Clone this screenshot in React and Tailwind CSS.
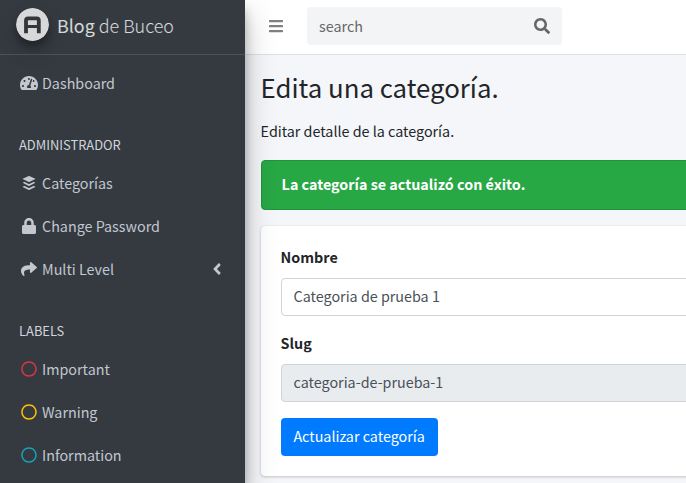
import { FaTachometerAlt, FaBuffer, FaLock, FaShare, FaAngleLeft, FaRegCircle, FaBars, FaSearch } from "react-icons/fa";

function NavItem({ icon: Icon, label, color = "text-[#c2c7d0]", iconSize = "h-[16px] w-[16px]", expandable = false }) {
  return (
    <a className="flex h-[43px] items-center pl-[16px] pr-[19px]">
      <span className={`flex w-[26px] justify-center ${color}`}>
        <Icon className={`shrink-0 ${iconSize}`} />
      </span>
      <span className="leading-6">{label}</span>
      {expandable && <FaAngleLeft size={18} className="ml-auto" />}
    </a>
  );
}

function NavHeader({ children }) {
  return (
    <div className="flex h-[57px] items-end pb-[6px] pl-[19px] text-[12.9px] leading-5 text-[#d0d4db]">
      {children}
    </div>
  );
}

function Brand() {
  return (
    <div className="flex h-[55px] items-start border-b border-[#4b545c] pl-[16px] pt-[8px]">
      <svg viewBox="0 0 33 33" className="size-[33px] rounded-full shadow-[0_10px_20px_rgba(0,0,0,0.19),0_6px_6px_rgba(0,0,0,0.23)]">
        <circle cx="16.5" cy="16.5" r="16.5" fill="#d7d8d9" />
        <path d="M10 25.2V12.6Q10 10.4 12.2 10.4H20.6Q22.8 10.4 22.8 12.6V25.2" fill="none" stroke="#343638" strokeWidth="3.8" />
        <path d="M10 18.6H23" fill="none" stroke="#343638" strokeWidth="3" />
      </svg>
      <span className="ml-[8px] mt-[2px] whitespace-nowrap text-[17.9px] font-light leading-[30px] text-white/80">
        <span className="font-normal">Blog</span> de Buceo
      </span>
    </div>
  );
}

function Sidebar() {
  return (
    <aside className="relative z-10 h-full w-[245px] shrink-0 bg-[#343a40] text-[#c2c7d0] shadow-[0_14px_28px_rgba(0,0,0,0.25),0_10px_10px_rgba(0,0,0,0.22)]">
      <Brand />
      <nav className="pt-[6px]">
        <NavItem icon={FaTachometerAlt} label="Dashboard" iconSize="h-[16px] w-[18px]" />
        <NavHeader>ADMINISTRADOR</NavHeader>
        <NavItem icon={FaBuffer} label="Categorías" />
        <NavItem icon={FaLock} label="Change Password" />
        <NavItem icon={FaShare} label="Multi Level" expandable />
        <NavHeader>LABELS</NavHeader>
        <NavItem icon={FaRegCircle} label="Important" color="text-[#dc3545]" />
        <NavItem icon={FaRegCircle} label="Warning" color="text-[#ffc107]" />
        <NavItem icon={FaRegCircle} label="Information" color="text-[#17a2b8]" />
      </nav>
    </aside>
  );
}

function TopBar() {
  return (
    <header className="flex h-[55px] items-start border-b border-[#dee2e6] bg-white pl-[23px] pt-[7px]">
      <FaBars size={16} className="mt-[11px] text-[#808080]" />
      <div className="ml-[23px] flex h-[38px] w-[255px] items-center justify-between rounded bg-[#f2f4f6] px-[12px] text-[#666]">
        <span>search</span>
        <FaSearch size={16} />
      </div>
    </header>
  );
}

function Field({ label, value, disabled = false }) {
  return (
    <div className="mb-[15px]">
      <div className="mb-[9px] font-bold leading-6">{label}</div>
      <div className={`flex h-[38px] items-center rounded border border-[#ced4da] px-[12px] pb-[2px] text-[#495057] ${disabled ? "bg-[#e9ecef]" : "bg-white"}`}>
        {value}
      </div>
    </div>
  );
}

export default function App() {
  return (
    <div className="flex h-[483px] w-[686px] overflow-hidden bg-[#f4f6f9] font-['Noto_Sans_CJK_SC',sans-serif] text-[14.33px] leading-6 text-[#212529]">
      <Sidebar />
      <div className="min-w-0 flex-1">
        <TopBar />
        <main className="w-[500px] pl-[15.6px] pt-[14px]">
          <h1 className="text-[25.8px] leading-[35px]">Edita una categoría.</h1>
          <p className="mt-[15px] leading-6">Editar detalle de la categoría.</p>
          <div className="mt-[17px] flex h-[50px] items-center rounded border border-[#23923d] bg-[#28a745] px-[20px] pb-[2px] font-bold text-white">
            La categoría se actualizó con éxito.
          </div>
          <section className="mt-[16px] h-[250px] rounded bg-white px-[20px] pt-[19px] shadow-[0_0_1px_rgba(0,0,0,0.125),0_1px_3px_rgba(0,0,0,0.2)]">
            <Field label="Nombre" value="Categoria de prueba 1" />
            <Field label="Slug" value="categoria-de-prueba-1" disabled />
            <button className="mt-[16px] flex h-[38px] w-[157px] items-center justify-center whitespace-nowrap rounded bg-[#007bff] pb-[2px] text-white">
              Actualizar categoría
            </button>
          </section>
        </main>
      </div>
    </div>
  );
}
